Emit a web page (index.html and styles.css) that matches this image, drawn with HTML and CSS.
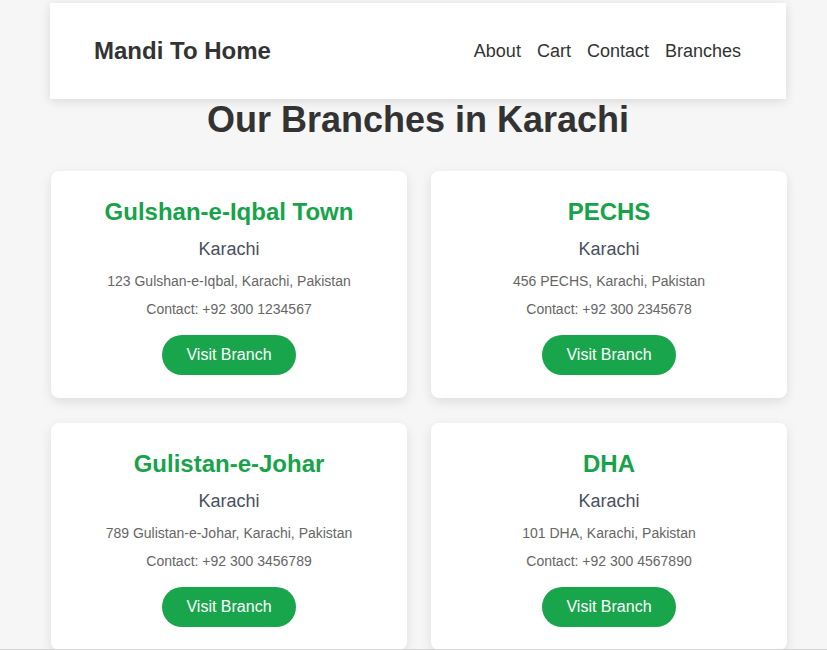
FILE: index.html
```html
<!DOCTYPE html>
<html lang="en">
<head>
<meta charset="utf-8">
<title>Mandi To Home - Branches</title>
<link rel="stylesheet" href="styles.css">
</head>
<body>
<div class="page">
  <header class="site-header">
    <div class="logo">Mandi To Home</div>
    <nav class="nav">
      <a href="#">About</a>
      <a href="#">Cart</a>
      <a href="#">Contact</a>
      <a href="#">Branches</a>
    </nav>
  </header>
  <h2 class="page-title">Our Branches in Karachi</h2>
  <div class="branches">
    <div class="card">
      <h3 class="card-title">Gulshan-e-Iqbal Town</h3>
      <p class="city">Karachi</p>
      <p class="address">123 Gulshan-e-Iqbal, Karachi, Pakistan</p>
      <p class="contact">Contact: +92 300 1234567</p>
      <a class="btn" href="#">Visit Branch</a>
    </div>
    <div class="card">
      <h3 class="card-title">PECHS</h3>
      <p class="city">Karachi</p>
      <p class="address">456 PECHS, Karachi, Pakistan</p>
      <p class="contact">Contact: +92 300 2345678</p>
      <a class="btn" href="#">Visit Branch</a>
    </div>
    <div class="card">
      <h3 class="card-title">Gulistan-e-Johar</h3>
      <p class="city">Karachi</p>
      <p class="address">789 Gulistan-e-Johar, Karachi, Pakistan</p>
      <p class="contact">Contact: +92 300 3456789</p>
      <a class="btn" href="#">Visit Branch</a>
    </div>
    <div class="card">
      <h3 class="card-title">DHA</h3>
      <p class="city">Karachi</p>
      <p class="address">101 DHA, Karachi, Pakistan</p>
      <p class="contact">Contact: +92 300 4567890</p>
      <a class="btn" href="#">Visit Branch</a>
    </div>
  </div>
</div>
<div class="bottom-edge"></div>
</body>
</html>
```
FILE: styles.css
```css
* { box-sizing: border-box; }

html, body {
  margin: 0;
  background: #f6f6f6;
}

body {
  font-family: "Liberation Sans", Arial, sans-serif;
  color: #333;
  padding: 3px 0 0 9px;
}

.page {
  width: 736px;
  margin: 0 auto;
}

.site-header {
  background: #fff;
  height: 96px;
  padding: 0 45px 0 44px;
  display: flex;
  align-items: center;
  justify-content: space-between;
  box-shadow: 0 2px 10px rgba(0, 0, 0, 0.12);
  position: relative;
  z-index: 1;
}

.logo {
  font-size: 24px;
  font-weight: bold;
  color: #333;
  line-height: 28px;
}

.nav {
  display: flex;
  gap: 16px;
}

.nav a {
  font-size: 18px;
  color: #333;
  text-decoration: none;
  line-height: 21px;
}

.page-title {
  margin: 0 0 31px;
  text-align: center;
  font-size: 36px;
  line-height: 41px;
  font-weight: bold;
  color: #333;
}

.branches {
  display: grid;
  grid-template-columns: 1fr 1fr;
  column-gap: 24px;
  row-gap: 25px;
  margin-left: 1px;
  margin-right: -1px;
}

.card {
  background: #fff;
  border-radius: 8px;
  box-shadow: 0 4px 12px rgba(0, 0, 0, 0.1);
  padding: 26px 20px 23px;
  text-align: center;
  display: flex;
  flex-direction: column;
  align-items: center;
}

.card-title {
  margin: 0 0 13px;
  font-size: 24px;
  line-height: 29px;
  font-weight: bold;
  color: #16a34a;
}

.city {
  margin: 0 0 13px;
  font-size: 18px;
  line-height: 21px;
  color: #4a5060;
}

.address {
  margin: 0 0 12px;
  font-size: 14px;
  line-height: 16px;
  color: #666;
}

.contact {
  margin: 0 0 18px;
  font-size: 14px;
  line-height: 16px;
  color: #666;
}

.btn {
  display: inline-block;
  background: #18a54b;
  color: #fff;
  text-decoration: none;
  font-size: 16px;
  line-height: 20px;
  padding: 10px 24px;
  border-radius: 20px;
}

.bottom-edge {
  position: fixed;
  left: 0;
  right: 0;
  bottom: 0;
  height: 1px;
  background: #d4d4d4;
  z-index: 5;
}
```
